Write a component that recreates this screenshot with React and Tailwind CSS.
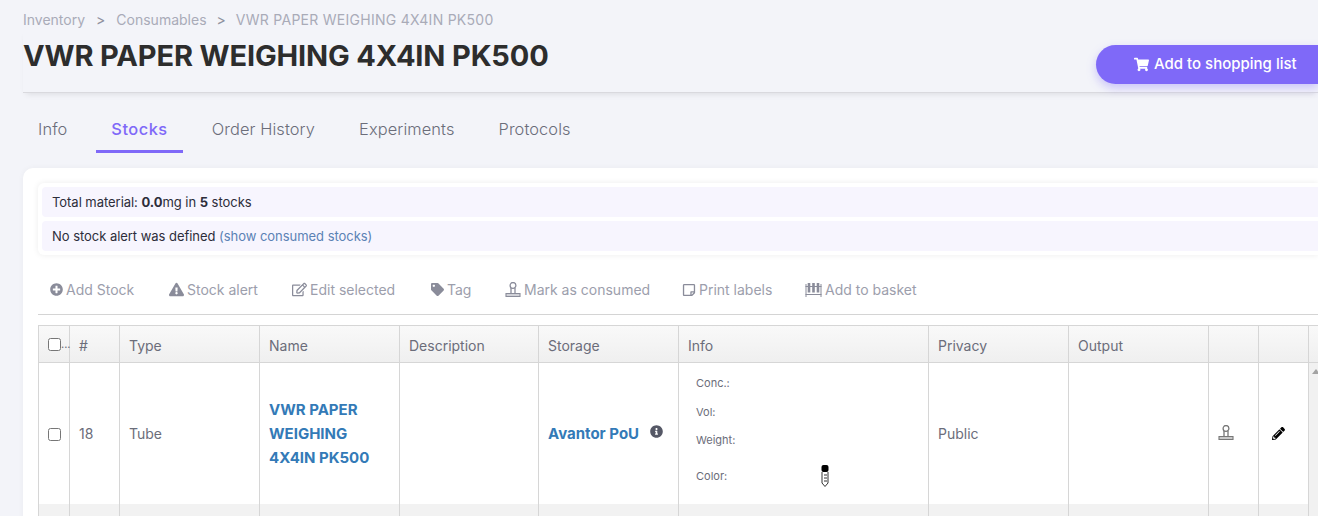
import React from "react";
import { FaShoppingCart, FaPlusCircle, FaExclamationTriangle, FaRegEdit, FaTag, FaInfoCircle, FaPencilAlt, FaRegStickyNote } from "react-icons/fa";

const Stamp = ({ className }) => (
  <svg viewBox="0 0 16 16" className={className} fill="none" stroke="currentColor">
    <circle cx="8" cy="3.4" r="2.9" strokeWidth="1.3" />
    <path d="M6 6v5.5M10 6v5.5" strokeWidth="1.3" />
    <path d="M1 11.5h14v3H1z" fill="currentColor" fillOpacity="0.4" strokeWidth="1.1" />
  </svg>
);

const Rack = ({ className }) => (
  <svg viewBox="0 0 17 16" className={className} fill="none" stroke="currentColor">
    <path d="M.5 4.5h16M.5 12.5h16M1 2v13M16 2v13" strokeWidth="1" />
    <path d="M4 1v9.5M8.5 1v9.5M13 1v9.5" strokeWidth="2.6" />
  </svg>
);

const Tube = () => (
  <svg viewBox="0 0 8 22" className="h-[22px] w-2">
    <rect x="0.5" width="7" height="7" rx="2" fill="#000" />
    <path d="M1 7v11l3 3.5 3-3.5V7" fill="#fff" stroke="#333" strokeWidth="1" />
    <path d="M3 10h3M3 13h3M3 16h3" stroke="#333" strokeWidth="1" />
  </svg>
);

const tabs = ["Info", "Stocks", "Order History", "Experiments", "Protocols"];

const actions = [
  { label: "Add Stock", icon: <FaPlusCircle className="text-[13px]" />, width: "w-[119px]" },
  { label: "Stock alert", icon: <FaExclamationTriangle className="text-[15px]" />, width: "w-[123px]" },
  { label: "Edit selected", icon: <FaRegEdit className="text-[15px]" />, width: "w-[139px]" },
  { label: "Tag", icon: <FaTag className="text-[13px]" />, width: "w-[74px]" },
  { label: "Mark as consumed", icon: <Stamp className="w-4 h-4" />, width: "w-[177px]" },
  { label: "Print labels", icon: <FaRegStickyNote className="text-[14px]" />, width: "w-[123px]" },
  { label: "Add to basket", icon: <Rack className="w-[17px] h-4" />, width: "" },
];

const columns = ["#", "Type", "Name", "Description", "Storage", "Info", "Privacy", "Output", "", ""];

const widths = ["w-[31px]", "w-[50px]", "w-[140px]", "w-[140px]", "w-[139px]", "w-[140px]", "w-[250px]", "w-[140px]", "w-[140px]", "w-[50px]", "w-[50px]", "w-[20px]"];

export default function App() {
  return (
    <div className="w-[1318px] h-[516px] overflow-hidden bg-[#f3f4f9] font-['Inter',sans-serif] text-[#333]">
      <div className="pl-[23px]">
        <div className="flex items-center pt-[9px] h-[29px] text-[14px] text-[#a9abb8]">
          <span>Inventory</span>
          <span className="mx-[11px] text-[#8f919e]">&gt;</span>
          <span>Consumables</span>
          <span className="mx-[10px] text-[#8f919e]">&gt;</span>
          <span className="tracking-[0.27px]">VWR PAPER WEIGHING 4X4IN PK500</span>
        </div>
        <div className="flex justify-between h-[64px] border-b border-[#d9d9de] shadow-[0_4px_6px_-3px_rgba(0,0,0,0.1)]">
          <h1 className="mt-[9px] text-[29px] tracking-[-0.15px] leading-[36px] font-bold text-[#2d2d2d]">VWR PAPER WEIGHING 4X4IN PK500</h1>
          <button className="flex items-center mt-[16px] w-[222px] h-[39px] pl-[38px] rounded-l-[20px] bg-[#7f69f8] text-white text-[15px] font-medium shadow-[0_4px_10px_rgba(127,105,248,0.35)] shrink-0">
            <FaShoppingCart className="mr-[5px] text-[15px]" />
            Add to shopping list
          </button>
        </div>
      </div>

      <div className="flex pl-[15px] ml-[23px] h-[61px] pt-[24px] gap-[44px] text-[16.4px] tracking-[0.1px] text-[#6b6d7a] font-light">
        {tabs.map((t) => (
          <div key={t} className={t === "Stocks" ? "relative text-[#7f69f8] font-medium tracking-[0.5px]" : ""}>
            {t}
            {t === "Stocks" && <div className="absolute -left-[15px] -right-[15px] top-[33px] h-[3px] bg-[#7f69f8]" />}
          </div>
        ))}
      </div>

      <div className="ml-[23px] mt-[14px] pl-[15px] pt-[15px] bg-white rounded-tl-[10px] h-[400px] shadow-[0_0_6px_rgba(0,0,0,0.04)]">
        <div className="py-1 pl-1 bg-white rounded-l-md shadow-[0_0_6px_rgba(0,0,0,0.08)] flex flex-col gap-1 text-[13px] tracking-[-0.04px] text-[#2d2d3a]">
          <div className="h-[30px] flex items-center pl-[10px] pt-[1px] bg-[#f7f5fe] rounded-l">
            <span>Total material: <b className="font-bold">0.0</b>mg in <b className="font-bold">5</b> stocks</span>
          </div>
          <div className="h-[30px] flex items-center pl-[10px] pt-[1px] bg-[#f7f5fe] rounded-l">
            <span>No stock alert was defined <span className="text-[#5b82b5]">(show consumed stocks)</span></span>
          </div>
        </div>

        <div className="flex items-center h-[60px] pt-[10px] pl-[12px] border-b border-[#d4d4d4] text-[14px] text-[#9c9eac]">
          {actions.map((a) => (
            <div key={a.label} className={`flex items-center gap-[3px] shrink-0 ${a.width}`}>
              <span className="text-[#8a8c9a] flex items-center">{a.icon}</span>
              {a.label}
            </div>
          ))}
        </div>

        <table className="mt-[10px] table-fixed border-collapse w-[1290px] text-[14px] text-[#6b6d7a]">
          <colgroup>
            {widths.map((w, i) => <col key={i} className={w} />)}
          </colgroup>
          <thead>
            <tr className="h-[37px] bg-gradient-to-b from-[#f9f9f9] to-[#efefef]">
              <th className="border border-[#d6d6d6] pl-[9px] text-left font-normal">
                <div className="flex items-center">
                  <input type="checkbox" className="w-[13px] h-[13px]" />
                  <span className="text-[11px] leading-none">...</span>
                </div>
              </th>
              {columns.map((c, i) => (
                <th key={i} className="border border-[#d6d6d6] pl-[9px] pt-[3px] text-left font-normal">{c}</th>
              ))}
              <th className="border-y border-[#d6d6d6]" />
            </tr>
          </thead>
          <tbody>
            <tr className="h-[141px] bg-white">
              <td className="border-x border-[#d6d6d6] pl-[9px]"><input type="checkbox" className="block mt-[3px] w-[13px] h-[13px]" /></td>
              <td className="border-x border-[#d6d6d6] pl-[9px]">18</td>
              <td className="border-x border-[#d6d6d6] pl-[9px]">Tube</td>
              <td className="border-x border-[#d6d6d6] pl-[9px] pr-[16px] pt-[2px] text-[15px] font-bold leading-[24px] text-[#337ab7]">VWR PAPER WEIGHING 4X4IN PK500</td>
              <td className="border-x border-[#d6d6d6]" />
              <td className="border-x border-[#d6d6d6] pl-[9px] pt-[2px] text-[15px] font-bold text-[#337ab7]">
                <div className="flex items-center">
                  Avantor PoU
                  <FaInfoCircle className="ml-[11px] -mt-[5px] text-[13px] text-[#555866]" />
                </div>
              </td>
              <td className="border-x border-[#d6d6d6] pl-[17px] pt-[1px] text-[11px]">
                <div className="flex flex-col">
                  <div className="h-[28px] flex items-center">Conc.:</div>
                  <div className="h-[29px] flex items-center">Vol:</div>
                  <div className="h-[28px] flex items-center">Weight:</div>
                  <div className="h-[44px] flex items-center">
                    <span className="w-[125px]">Color:</span>
                    <Tube />
                  </div>
                </div>
              </td>
              <td className="border-x border-[#d6d6d6] pl-[9px]">Public</td>
              <td className="border-x border-[#d6d6d6]" />
              <td className="border-x border-[#d6d6d6] pl-[9px] text-[#777]"><Stamp className="w-4 h-4" /></td>
              <td className="border-x border-[#d6d6d6] pl-[13px] text-black"><FaPencilAlt className="text-[13px]" /></td>
              <td rowSpan={2} className="bg-[#f1f1f1] align-top pl-[3px] pt-[6px]">
                <svg viewBox="0 0 8 5" className="w-2 h-[5px] block"><path d="M0 5 4 0l4 5z" fill="#a3a3a3" /></svg>
              </td>
            </tr>
            <tr className="h-[20px] bg-[#f2f2f2]">
              {widths.slice(0, 11).map((w, i) => <td key={i} className="border-x border-[#d6d6d6]" />)}
            </tr>
          </tbody>
        </table>
      </div>
    </div>
  );
}
